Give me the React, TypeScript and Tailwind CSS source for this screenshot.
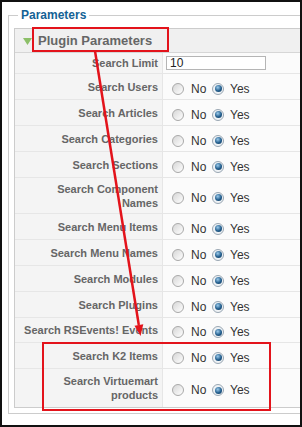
import React from "react";

type Row = {
  label: React.ReactNode;
  h: string;
  kind?: "input" | "radio";
};

const rows: Row[] = [
  { label: "Search Limit", h: "h-[21px]", kind: "input" },
  { label: "Search Users", h: "h-[26px]" },
  { label: "Search Articles", h: "h-[26px]" },
  { label: "Search Categories", h: "h-[26px]" },
  { label: "Search Sections", h: "h-[26px]" },
  {
    label: (
      <>
        Search Component
        <br />
        Names
      </>
    ),
    h: "h-[36px]",
  },
  { label: "Search Menu Items", h: "h-[26px]" },
  { label: "Search Menu Names", h: "h-[26px]" },
  { label: "Search Modules", h: "h-[26px]" },
  { label: "Search Plugins", h: "h-[26px]" },
  { label: "Search RSEvents! Events", h: "h-[25px]" },
  { label: "Search K2 Items", h: "h-[26px]" },
  {
    label: (
      <>
        Search Virtuemart
        <br />
        products
      </>
    ),
    h: "h-[38px]",
  },
];

const Radio: React.FC<{ checked?: boolean }> = ({ checked }) => (
  <span
    className={`flex items-center justify-center w-[12px] h-[12px] rounded-full border shrink-0 ${
      checked
        ? "border-[#9aa7b3] bg-[#eef2f5]"
        : "border-[#a9a9a9] bg-[linear-gradient(135deg,#d6d6d6,#ffffff)]"
    }`}
  >
    {checked && (
      <span className="block w-[7px] h-[7px] rounded-full bg-[radial-gradient(circle_at_40%_35%,#9ccbec,#225d8c_55%,#143a5c)]" />
    )}
  </span>
);

const ParamRow: React.FC<{ row: Row; last: boolean }> = ({ row, last }) => (
  <div className={`flex ${row.h} ${last ? "" : "border-b border-[#e6e6e6]"}`}>
    <div className="w-[148px] shrink-0 flex items-center justify-end pr-[4px] bg-[#f4f4f4] border-r border-[#e6e6e6] text-right text-[11px] leading-[14px] font-bold text-[#666666] whitespace-nowrap">
      <span>{row.label}</span>
    </div>
    <div className="flex-1 flex items-center bg-[#fbfbfb] text-[12px] text-[#333333]">
      {row.kind === "input" ? (
        <div className="ml-[3px] w-[100px] h-[14px] border border-[#b5b5b5] bg-white flex items-center pl-[3px] text-[12px] leading-none text-[#222]">
          10
        </div>
      ) : (
        <div className="flex items-center pt-[4px]">
          <span className="ml-[9px]">
            <Radio />
          </span>
          <span className="ml-[7px] w-[14px] mr-[7px] leading-none">No</span>
          <Radio checked />
          <span className="ml-[6px] leading-none">Yes</span>
        </div>
      )}
    </div>
  </div>
);

export default function App() {
  return (
    <div
      className="relative w-[302px] h-[427px] overflow-hidden bg-white border-2 border-[#111111]"
      style={{ fontFamily: '"Liberation Sans", Arial, sans-serif' }}
    >
      <fieldset className="mt-[6px] ml-[6px] w-[310px] border border-[#cccccc] px-[5px] pt-[6px] pb-[5px]">
        <legend className="ml-[4px] px-[3px] text-[12px] leading-[14px] font-bold text-[#146295]">
          Parameters
        </legend>
        <div className="border border-[#cccccc]">
          <div className="h-[24px] flex items-center bg-[#f0f0f0] border-b border-[#d6d6d6]">
            <svg width="9" height="7" viewBox="0 0 9 7" className="ml-[8px] mt-[2px]">
              <polygon points="0,0 9,0 4.5,7" fill="#8cbf68" />
            </svg>
            <span className="ml-[6px] text-[13px] font-bold text-[#666666]">
              Plugin Parameters
            </span>
          </div>
          {rows.map((r, i) => (
            <ParamRow key={i} row={r} last={i === rows.length - 1} />
          ))}
        </div>
      </fieldset>

      {/* annotation overlay */}
      <svg
        className="absolute top-[-2px] left-[-2px] pointer-events-none"
        width="302"
        height="427"
        viewBox="0 0 302 427"
      >
        <rect x="33" y="28" width="135" height="23" fill="none" stroke="#e3131b" strokeWidth="2" />
        <rect x="43" y="343" width="227" height="67" fill="none" stroke="#e3131b" strokeWidth="2" />
        <line x1="95" y1="51" x2="138.8" y2="325" stroke="#e3131b" strokeWidth="2.5" />
        <polygon points="140.5,336 143.3,324.3 134.5,325.7" fill="#e3131b" />
      </svg>
    </div>
  );
}
